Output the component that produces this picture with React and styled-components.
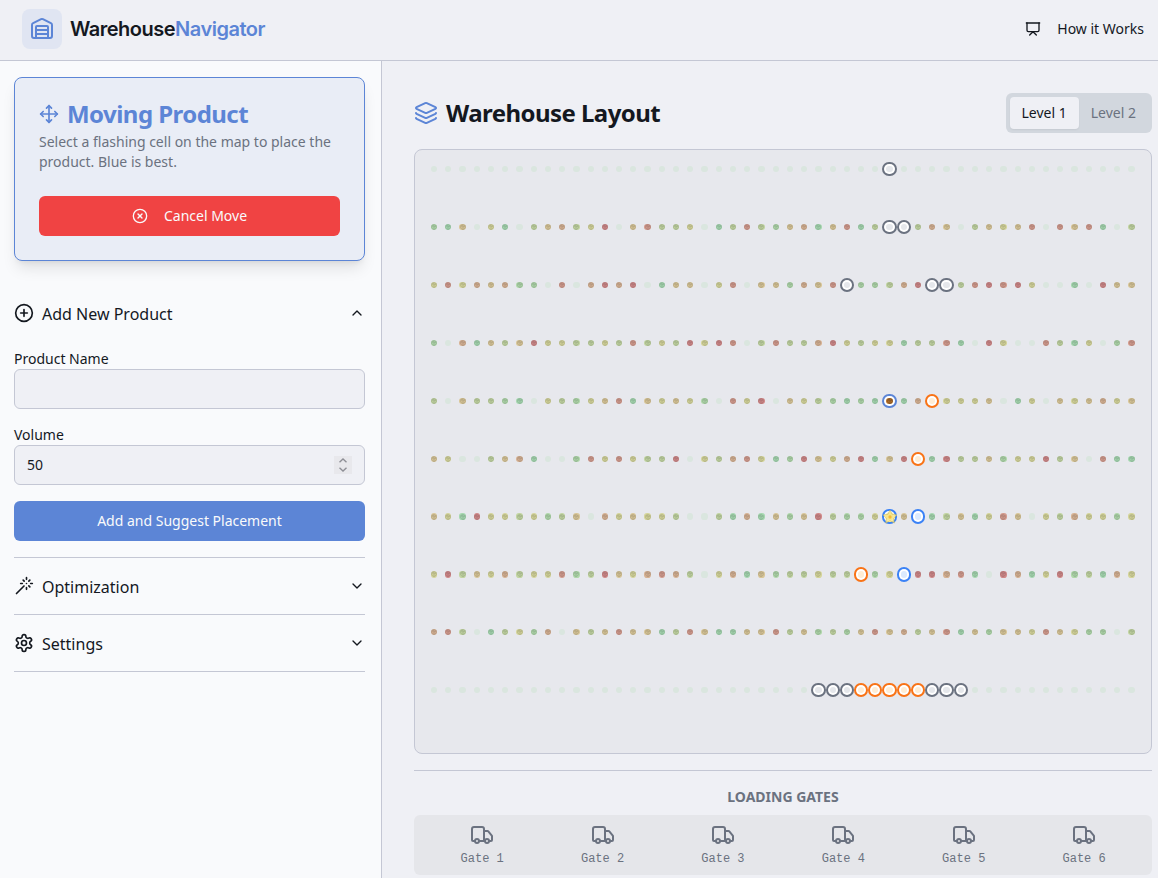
import React from "react";
import styled, { createGlobalStyle, css } from "styled-components";
import {
  Warehouse,
  Presentation,
  Move,
  CircleX,
  CirclePlus,
  ChevronUp,
  ChevronDown,
  Layers,
  Truck,
  Package,
} from "lucide-react";

const c = {
  page: "#eff0f5",
  side: "#f9fafc",
  fg: "#14181f",
  muted: "#6b7280",
  primary: "#5c85d6",
  border: "#c4c7d4",
  danger: "#f04343",
};

const GlobalStyle = createGlobalStyle`
  *, *::before, *::after { box-sizing: border-box; }
  html, body { margin: 0; height: 100%; overflow: hidden; }
  #root { height: 100%; }
  body {
    background: ${c.page};
    color: ${c.fg};
    font-family: "Noto Sans", sans-serif;
    font-size: 14px;
    line-height: 20px;
  }
  button, input { font: inherit; color: inherit; }
  button { border: 0; background: none; padding: 0; }
  svg { display: block; flex-shrink: 0; }
`;

const Shell = styled.div`
  height: 878px;
  display: flex;
  flex-direction: column;
  overflow: hidden;
`;

const Header = styled.header`
  flex: none;
  height: 61px;
  padding: 0 14px 2px 22px;
  display: flex;
  align-items: center;
  justify-content: space-between;
  border-bottom: 1px solid ${c.border};
`;

const Brand = styled.div`
  display: flex;
  align-items: center;
  gap: 8px;
`;

const BrandMark = styled.div`
  width: 40px;
  height: 40px;
  display: grid;
  place-items: center;
  border-radius: 8px;
  background: #e0e5f2;
  color: ${c.primary};
`;

const BrandName = styled.span`
  font: 600 20px/28px Inter, sans-serif;
  letter-spacing: -0.5px;
  span { color: ${c.primary}; }
`;

const HelpButton = styled.button`
  display: flex;
  align-items: center;
  gap: 16px;
`;

const Body = styled.div`
  flex: 1;
  min-height: 0;
  display: flex;
`;

const Sidebar = styled.aside`
  flex: none;
  width: 382px;
  padding: 16px 16px 0 14px;
  background: ${c.side};
  border-right: 1px solid ${c.border};
`;

const MoveCard = styled.section`
  padding: 24px;
  margin-bottom: 24px;
  background: #e9edf6;
  border: 1px solid ${c.primary};
  border-radius: 8px;
  box-shadow: 0 10px 15px -3px rgba(0, 0, 0, 0.1), 0 4px 6px -4px rgba(0, 0, 0, 0.1);
`;

const MoveTitle = styled.h2`
  display: flex;
  align-items: center;
  gap: 8px;
  margin: 0 0 6px;
  font-size: 24px;
  line-height: 24px;
  font-weight: 700;
  letter-spacing: -0.55px;
  color: ${c.primary};
`;

const MoveText = styled.p`
  margin: 0 0 24px;
  color: ${c.muted};
`;

const WideButton = styled.button`
  width: 100%;
  height: 40px;
  display: flex;
  align-items: center;
  justify-content: center;
  gap: 16px;
  border-radius: 6px;
  color: #f9fafb;
  background: ${(p) => (p.$danger ? c.danger : c.primary)};
`;

const Section = styled.section`
  border-bottom: 1px solid ${c.border};
`;

const SectionHead = styled.button`
  width: 100%;
  height: 56px;
  display: flex;
  align-items: center;
  gap: 8px;
  font-size: 16px;
  line-height: 24px;
  text-align: left;
  span { flex: 1; padding-top: 2px; }
`;

const SectionBody = styled.div`
  padding: 8px 0 16px;
  display: flex;
  flex-direction: column;
  gap: 16px;
`;

const Field = styled.label`
  display: block;
`;

const InputBox = styled.div`
  height: 40px;
  display: flex;
  align-items: center;
  padding: 0 12px;
  border: 1px solid ${c.border};
  border-radius: 6px;
  background: ${c.page};
`;

const Input = styled.input`
  flex: 1;
  min-width: 0;
  padding: 0;
  border: 0;
  outline: 0;
  background: none;
`;

const Stepper = styled.span`
  width: 18px;
  height: 18px;
  display: flex;
  flex-direction: column;
  align-items: center;
  justify-content: center;
  gap: 4px;
  background: #e8e8ec;
  color: #8e8f96;
`;

const Main = styled.main`
  flex: 1;
  min-width: 0;
  padding: 32px 6px 0 32px;
`;

const TitleRow = styled.div`
  height: 40px;
  margin-bottom: 16px;
  display: flex;
  align-items: center;
  justify-content: space-between;
`;

const Title = styled.h1`
  display: flex;
  align-items: center;
  gap: 8px;
  margin: 0;
  font-size: 24px;
  line-height: 32px;
  font-weight: 700;
  letter-spacing: -0.55px;
  svg { color: ${c.primary}; }
`;

const Tabs = styled.div`
  display: flex;
  height: 40px;
  padding: 4px;
  border-radius: 6px;
  background: #d2d7de;
`;

const Tab = styled.button`
  padding: 0 12px;
  border-radius: 4px;
  color: ${c.muted};
  ${(p) =>
    p.$active &&
    css`
      color: ${c.fg};
      background: ${c.page};
      box-shadow: 0 1px 2px rgba(0, 0, 0, 0.06);
    `}
`;

const MapCard = styled.div`
  height: 605px;
  padding: 16px 16.35px 16px 16px;
  display: grid;
  grid-template-columns: repeat(50, minmax(0, 1fr));
  grid-template-rows: repeat(10, minmax(0, 1fr));
  gap: 8px;
  border: 1px solid ${c.border};
  border-radius: 8px;
  background: #e7e8ed;
`;

const Cell = styled.div`
  aspect-ratio: 1;
  align-self: start;
  display: grid;
  place-items: center;
  border-radius: 50%;
  background: ${(p) => p.$fill};
  ${(p) =>
    p.$ring &&
    css`
      box-shadow: 0 0 0 2px #fff, 0 0 0 4px ${p.$ring};
    `}
  svg { opacity: ${(p) => (p.$ring ? 0.4 : 0.2)}; }
`;

const StarMark = styled.svg`
  && {
    opacity: 0.85;
    width: 16px;
    height: 16px;
    margin: -5px;
  }
`;

const Gates = styled.section`
  margin-top: 16px;
  padding-top: 16px;
  border-top: 1px solid ${c.border};
`;

const GatesTitle = styled.h3`
  margin: 0 0 8px;
  text-align: center;
  font-size: 14px;
  line-height: 20px;
  font-weight: 700;
  color: ${c.muted};
`;

const GateRow = styled.div`
  height: 60px;
  padding: 8px 7.7px 8px 8px;
  display: grid;
  grid-template-columns: repeat(6, 1fr);
  border-radius: 6px;
  background: #e5e6ea;
`;

const Gate = styled.div`
  display: flex;
  flex-direction: column;
  align-items: center;
  gap: 4px;
  color: ${c.muted};
  font: 12px/16px "Liberation Mono", monospace;
`;

/* One character per cell: "." is free, 1-8 is fill from green to red,
   G/O/B are rated targets, S is the moved product, Y is the best target. */
const shelves = [
  "................................G.................",
  "215.41.356348.573" + "34.137325615713GG" + "365.35457.7571.3",
  "47465622.7.6868.1" + "55.47.552657G2236" + "8GG378784..1.855",
  "2.615358443343734" + "38487.37336843441" + "3371.84..7314.27",
  "3.53321.432457154" + "542.748.5432121S1" + "6O4445.14.545645",
  "54..3561..2747433" + "8.436741285468158" + "O18335244835.711",
  "54184434235.64544" + "3..316152583224Y5" + "B1351475.4364424",
  "48354634472385467" + "63.461523343" + "3O24B" + "88671.8614823164",
  "673.13426.5357551" + "37511557352325756" + "35715255475422.3",
  "...........................GGGOOOOOGGG............",
];

const fills = {
  ".": "#dae6df",
  1: "#a6d8b0",
  2: "#b0d8aa",
  3: "#c2d5a1",
  4: "#d5d59a",
  5: "#d9c697",
  6: "#d7b293",
  7: "#d49b8d",
  8: "#d18888",
  G: "#e5e7eb",
  O: "#ffedd5",
  B: "#dbeafe",
  S: "#bd7428",
  Y: "#f8e68c",
};

const rings = { G: c.muted, O: "#f97316", B: "#3b82f6", S: c.primary, Y: "#3b82f6" };

function MapCell({ kind }) {
  return (
    <Cell $fill={fills[kind]} $ring={rings[kind]}>
      {/[1-8S]/.test(kind) && <Package size={6} strokeWidth={3} />}
      {kind === "Y" && (
        <StarMark viewBox="0 0 24 24">
          <circle cx="12" cy="12" r="7.5" fill="#f8eba6" />
          <path
            d="M12 1.500 15.100 8l7.400 1-5.300 5 1.300 7-6.500-3.400L5.500 21l1.300-7L1.500 9l7.400-1z"
            fill="#f8e68c"
            stroke="#cdbb55"
            strokeWidth="1"
            strokeLinejoin="round"
          />
          <circle cx="12" cy="12" r="2.5" fill="#f5b52b" />
        </StarMark>
      )}
    </Cell>
  );
}

const WandIcon = () => (
  <svg width="20" height="20" viewBox="0 0 24 24" fill="none" stroke="currentColor" strokeWidth="2" strokeLinecap="round" strokeLinejoin="round">
    <path d="M15 4V2M15 16v-2M8 9h2M20 9h2M17.8 11.8 19 13M15 9h.01M17.8 6.2 19 5M3 21l9-9M12.2 6.2 11 5" />
  </svg>
);

const GearIcon = () => (
  <svg width="20" height="20" viewBox="0 0 24 24" fill="none" stroke="currentColor" strokeWidth="2" strokeLinecap="round" strokeLinejoin="round">
    <path d="M12.22 2h-.44a2 2 0 0 0-2 2v.18a2 2 0 0 1-1 1.73l-.43.25a2 2 0 0 1-2 0l-.15-.08a2 2 0 0 0-2.73.73l-.22.38a2 2 0 0 0 .73 2.73l.15.1a2 2 0 0 1 1 1.72v.51a2 2 0 0 1-1 1.74l-.15.09a2 2 0 0 0-.73 2.73l.22.38a2 2 0 0 0 2.73.73l.15-.08a2 2 0 0 1 2 0l.43.25a2 2 0 0 1 1 1.73V20a2 2 0 0 0 2 2h.44a2 2 0 0 0 2-2v-.18a2 2 0 0 1 1-1.73l.43-.25a2 2 0 0 1 2 0l.15.08a2 2 0 0 0 2.73-.73l.22-.39a2 2 0 0 0-.73-2.73l-.15-.08a2 2 0 0 1-1-1.74v-.5a2 2 0 0 1 1-1.74l.15-.09a2 2 0 0 0 .73-2.73l-.22-.38a2 2 0 0 0-2.73-.73l-.15.08a2 2 0 0 1-2 0l-.43-.25a2 2 0 0 1-1-1.73V4a2 2 0 0 0-2-2z" />
    <circle cx="12" cy="12" r="3" />
  </svg>
);

export default function App() {
  return (
    <>
      <GlobalStyle />
      <Shell>
        <Header>
          <Brand>
            <BrandMark><Warehouse size={24} /></BrandMark>
            <BrandName>Warehouse<span>Navigator</span></BrandName>
          </Brand>
          <HelpButton><Presentation size={16} />How it Works</HelpButton>
        </Header>
        <Body>
          <Sidebar>
            <MoveCard>
              <MoveTitle><Move size={20} />Moving Product</MoveTitle>
              <MoveText>Select a flashing cell on the map to place the product. Blue is best.</MoveText>
              <WideButton $danger><CircleX size={16} />Cancel Move</WideButton>
            </MoveCard>
            <Section>
              <SectionHead><CirclePlus size={20} /><span>Add New Product</span><ChevronUp size={16} /></SectionHead>
              <SectionBody>
                <Field>
                  Product Name
                  <InputBox><Input type="text" /></InputBox>
                </Field>
                <Field>
                  Volume
                  <InputBox>
                    <Input type="text" defaultValue="50" />
                    <Stepper>
                      <svg width="8" height="5" viewBox="0 0 8 5" fill="none" stroke="currentColor" strokeWidth="1.4"><path d="M.5 4.200 4 1l3.500 3.200" /></svg>
                      <svg width="8" height="5" viewBox="0 0 8 5" fill="none" stroke="currentColor" strokeWidth="1.4"><path d="M.5.8 4 4 7.500.8" /></svg>
                    </Stepper>
                  </InputBox>
                </Field>
                <WideButton>Add and Suggest Placement</WideButton>
              </SectionBody>
            </Section>
            <Section>
              <SectionHead><WandIcon /><span>Optimization</span><ChevronDown size={16} /></SectionHead>
            </Section>
            <Section>
              <SectionHead><GearIcon /><span>Settings</span><ChevronDown size={16} /></SectionHead>
            </Section>
          </Sidebar>
          <Main>
            <TitleRow>
              <Title><Layers size={24} />Warehouse Layout</Title>
              <Tabs><Tab $active>Level 1</Tab><Tab>Level 2</Tab></Tabs>
            </TitleRow>
            <MapCard>
              {shelves.flatMap((row, y) => [...row].map((kind, x) => <MapCell key={`${y}-${x}`} kind={kind} />))}
            </MapCard>
            <Gates>
              <GatesTitle>LOADING GATES</GatesTitle>
              <GateRow>
                {[1, 2, 3, 4, 5, 6].map((n) => (
                  <Gate key={n}><Truck size={24} />Gate {n}</Gate>
                ))}
              </GateRow>
            </Gates>
          </Main>
        </Body>
      </Shell>
    </>
  );
}
